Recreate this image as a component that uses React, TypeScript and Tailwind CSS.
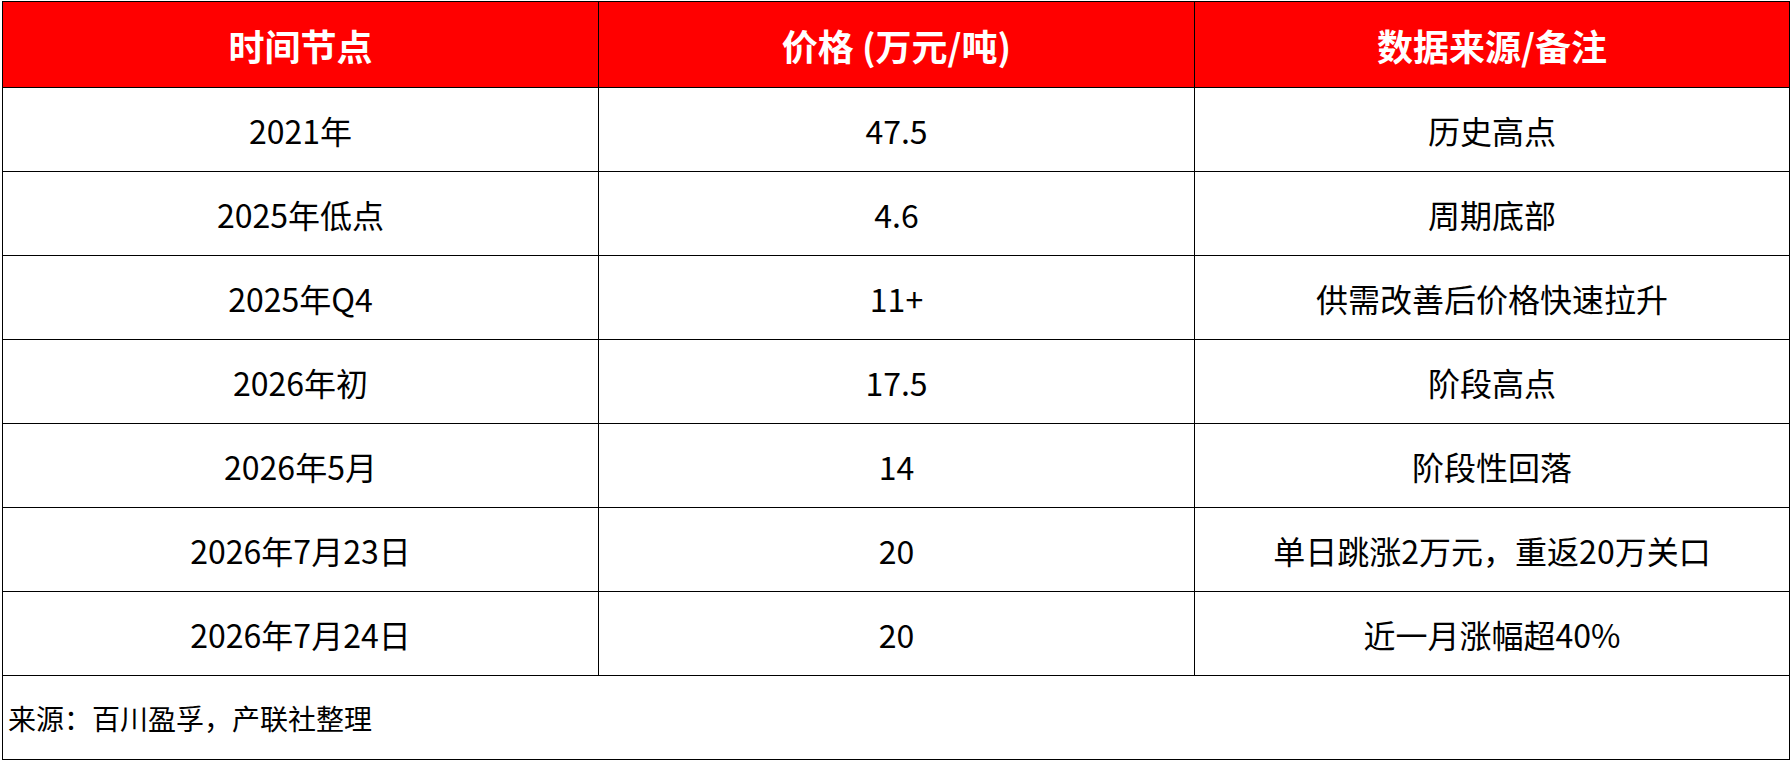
import React from "react";

const rows: [string, string, string][] = [
  ["2021年", "47.5", "历史高点"],
  ["2025年低点", "4.6", "周期底部"],
  ["2025年Q4", "11+", "供需改善后价格快速拉升"],
  ["2026年初", "17.5", "阶段高点"],
  ["2026年5月", "14", "阶段性回落"],
  ["2026年7月23日", "20", "单日跳涨2万元，重返20万关口"],
  ["2026年7月24日", "20", "近一月涨幅超40%"],
];

const font = { fontFamily: '"Microsoft YaHei", "Noto Sans CJK SC", "Noto Sans", sans-serif' };

export default function App() {
  return (
    <div className="pl-[2px] pt-[1px] bg-white w-[1792px] h-[760px]" style={font}>
      <div className="w-[1788px] border border-black">
        <div className="grid grid-cols-[596px_596px_594px] h-[86px] bg-[#ff0000] border-b border-black text-white font-bold text-[36px] leading-none">
          <div className="flex items-center justify-center border-r border-black">时间节点</div>
          <div className="flex items-center justify-center border-r border-black">价格 (万元/吨)</div>
          <div className="flex items-center justify-center">数据来源/备注</div>
        </div>
        {rows.map((r, i) => (
          <div
            key={i}
            className="grid grid-cols-[596px_596px_594px] h-[84px] border-b border-black text-black text-[32px] leading-none"
          >
            <div className="flex items-center justify-center border-r border-black">{r[0]}</div>
            <div className="flex items-center justify-center border-r border-black">{r[1]}</div>
            <div className="flex items-center justify-center">{r[2]}</div>
          </div>
        ))}
        <div className="h-[83px] flex items-center pl-[5px] text-black text-[28px] leading-none">
          来源：百川盈孚，产联社整理
        </div>
      </div>
    </div>
  );
}
